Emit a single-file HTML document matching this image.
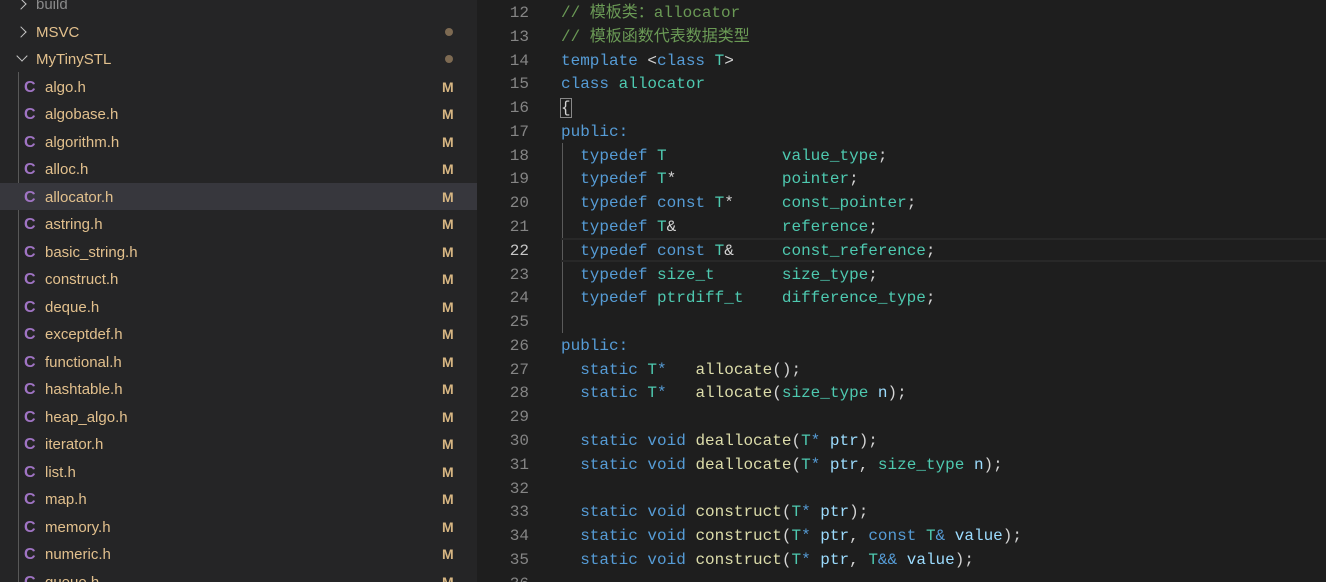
<!DOCTYPE html>
<html style="overflow:hidden;width:1326px;height:582px"><head><meta charset="utf-8"><style>
*{margin:0;padding:0;box-sizing:border-box}
body{width:1326px;height:582px;overflow:hidden;background:#1e1e1e;position:relative;font-family:"Liberation Sans","Noto Sans CJK SC",sans-serif}
#side{position:absolute;left:0;top:0;width:477px;height:582px;background:#252526;overflow:hidden}
.r{position:absolute;left:0;width:477px;height:27.5px;line-height:29px;font-size:15px;color:#e2c08d}
.r .n{position:absolute;left:45px}
.r .c{position:absolute;left:24px;color:#a074c4;font-weight:bold;font-size:16px}
.r .m{position:absolute;left:442px;font-weight:bold;font-size:14px;color:#d7b682}
.r .d{position:absolute;left:445px;top:10px;width:8px;height:8px;border-radius:50%;background:#7d6a52}
.chev{position:absolute;left:17px;top:10px;width:8px;height:8px;border-right:1.5px solid #c5c5c5;border-top:1.5px solid #c5c5c5;transform:rotate(45deg)}
.down{left:18px;top:7px;transform:rotate(135deg)}
#guide{position:absolute;left:18px;top:72px;width:1px;height:520px;background:#585858}
#ed{position:absolute;left:477px;top:0;right:0;height:582px;background:#1e1e1e;overflow:hidden}
.l{position:absolute;left:0;right:0;height:23.78px;line-height:27px;font-family:"Liberation Mono","Noto Sans CJK SC",monospace;font-size:16px;white-space:pre;color:#d4d4d4}
.ln{position:absolute;left:0;width:52px;text-align:right;color:#858585}
.cd{position:absolute;left:84px}
.cm{color:#6a9955}.k{color:#569cd6}.t{color:#4ec9b0}.f{color:#dcdcaa}.v{color:#9cdcfe}
</style></head><body>
<div id="side">
<div id="guide"></div>
<div class="r" style="top:-10px"><span class="chev"></span><span class="n" style="left:36px;color:#8b8b8b">build</span></div>
<div class="r" style="top:17.5px"><span class="chev"></span><span class="n" style="left:36px">MSVC</span><span class="d"></span></div>
<div class="r" style="top:45px"><span class="chev down"></span><span class="n" style="left:36px">MyTinySTL</span><span class="d"></span></div>
<div class="r" style="top:72.5px"><span class="c">C</span><span class="n">algo.h</span><span class="m">M</span></div>
<div class="r" style="top:100px"><span class="c">C</span><span class="n">algobase.h</span><span class="m">M</span></div>
<div class="r" style="top:127.5px"><span class="c">C</span><span class="n">algorithm.h</span><span class="m">M</span></div>
<div class="r" style="top:155px"><span class="c">C</span><span class="n">alloc.h</span><span class="m">M</span></div>
<div class="r" style="top:182.5px;background:#37373d"><span class="c">C</span><span class="n">allocator.h</span><span class="m">M</span></div>
<div class="r" style="top:210px"><span class="c">C</span><span class="n">astring.h</span><span class="m">M</span></div>
<div class="r" style="top:237.5px"><span class="c">C</span><span class="n">basic_string.h</span><span class="m">M</span></div>
<div class="r" style="top:265px"><span class="c">C</span><span class="n">construct.h</span><span class="m">M</span></div>
<div class="r" style="top:292.5px"><span class="c">C</span><span class="n">deque.h</span><span class="m">M</span></div>
<div class="r" style="top:320px"><span class="c">C</span><span class="n">exceptdef.h</span><span class="m">M</span></div>
<div class="r" style="top:347.5px"><span class="c">C</span><span class="n">functional.h</span><span class="m">M</span></div>
<div class="r" style="top:375px"><span class="c">C</span><span class="n">hashtable.h</span><span class="m">M</span></div>
<div class="r" style="top:402.5px"><span class="c">C</span><span class="n">heap_algo.h</span><span class="m">M</span></div>
<div class="r" style="top:430px"><span class="c">C</span><span class="n">iterator.h</span><span class="m">M</span></div>
<div class="r" style="top:457.5px"><span class="c">C</span><span class="n">list.h</span><span class="m">M</span></div>
<div class="r" style="top:485px"><span class="c">C</span><span class="n">map.h</span><span class="m">M</span></div>
<div class="r" style="top:512.5px"><span class="c">C</span><span class="n">memory.h</span><span class="m">M</span></div>
<div class="r" style="top:540px"><span class="c">C</span><span class="n">numeric.h</span><span class="m">M</span></div>
<div class="r" style="top:567.5px"><span class="c">C</span><span class="n">queue.h</span><span class="m">M</span></div>
</div>
<div id="ed">
<div style="position:absolute;left:85px;top:142.7px;width:1px;height:190px;background:#5a5a5a"></div>
<div style="position:absolute;left:84px;right:0;top:237.8px;height:23.78px;border-top:2px solid #282828;border-bottom:2px solid #282828"></div>
<div class="l" style="top:0"><span class="ln">12</span><span class="cd cm">// 模板类：allocator</span></div>
<div class="l" style="top:23.78px"><span class="ln">13</span><span class="cd cm">// 模板函数代表数据类型</span></div>
<div class="l" style="top:47.56px"><span class="ln">14</span><span class="cd"><span class="k">template</span> &lt;<span class="k">class</span> <span class="t">T</span>&gt;</span></div>
<div class="l" style="top:71.34px"><span class="ln">15</span><span class="cd"><span class="k">class</span> <span class="t">allocator</span></span></div>
<div class="l" style="top:95.12px"><span class="ln">16</span><span class="cd"><span style="outline:1px solid #888">{</span></span></div>
<div class="l" style="top:118.9px"><span class="ln">17</span><span class="cd k">public:</span></div>
<div class="l" style="top:142.68px"><span class="ln">18</span><span class="cd">  <span class="k">typedef</span> <span class="t">T</span>            <span class="t">value_type</span>;</span></div>
<div class="l" style="top:166.46px"><span class="ln">19</span><span class="cd">  <span class="k">typedef</span> <span class="t">T</span>*           <span class="t">pointer</span>;</span></div>
<div class="l" style="top:190.24px"><span class="ln">20</span><span class="cd">  <span class="k">typedef</span> <span class="k">const</span> <span class="t">T</span>*     <span class="t">const_pointer</span>;</span></div>
<div class="l" style="top:214.02px"><span class="ln">21</span><span class="cd">  <span class="k">typedef</span> <span class="t">T</span>&amp;           <span class="t">reference</span>;</span></div>
<div class="l" style="top:237.8px"><span class="ln" style="color:#c6c6c6">22</span><span class="cd">  <span class="k">typedef</span> <span class="k">const</span> <span class="t">T</span>&amp;     <span class="t">const_reference</span>;</span></div>
<div class="l" style="top:261.58px"><span class="ln">23</span><span class="cd">  <span class="k">typedef</span> <span class="t">size_t</span>       <span class="t">size_type</span>;</span></div>
<div class="l" style="top:285.36px"><span class="ln">24</span><span class="cd">  <span class="k">typedef</span> <span class="t">ptrdiff_t</span>    <span class="t">difference_type</span>;</span></div>
<div class="l" style="top:309.14px"><span class="ln">25</span></div>
<div class="l" style="top:332.92px"><span class="ln">26</span><span class="cd k">public:</span></div>
<div class="l" style="top:356.7px"><span class="ln">27</span><span class="cd">  <span class="k">static</span> <span class="t">T</span><span class="k">*</span>   <span class="f">allocate</span>();</span></div>
<div class="l" style="top:380.48px"><span class="ln">28</span><span class="cd">  <span class="k">static</span> <span class="t">T</span><span class="k">*</span>   <span class="f">allocate</span>(<span class="t">size_type</span> <span class="v">n</span>);</span></div>
<div class="l" style="top:404.26px"><span class="ln">29</span></div>
<div class="l" style="top:428.04px"><span class="ln">30</span><span class="cd">  <span class="k">static</span> <span class="k">void</span> <span class="f">deallocate</span>(<span class="t">T</span><span class="k">*</span> <span class="v">ptr</span>);</span></div>
<div class="l" style="top:451.82px"><span class="ln">31</span><span class="cd">  <span class="k">static</span> <span class="k">void</span> <span class="f">deallocate</span>(<span class="t">T</span><span class="k">*</span> <span class="v">ptr</span>, <span class="t">size_type</span> <span class="v">n</span>);</span></div>
<div class="l" style="top:475.6px"><span class="ln">32</span></div>
<div class="l" style="top:499.38px"><span class="ln">33</span><span class="cd">  <span class="k">static</span> <span class="k">void</span> <span class="f">construct</span>(<span class="t">T</span><span class="k">*</span> <span class="v">ptr</span>);</span></div>
<div class="l" style="top:523.16px"><span class="ln">34</span><span class="cd">  <span class="k">static</span> <span class="k">void</span> <span class="f">construct</span>(<span class="t">T</span><span class="k">*</span> <span class="v">ptr</span>, <span class="k">const</span> <span class="t">T</span><span class="k">&amp;</span> <span class="v">value</span>);</span></div>
<div class="l" style="top:546.94px"><span class="ln">35</span><span class="cd">  <span class="k">static</span> <span class="k">void</span> <span class="f">construct</span>(<span class="t">T</span><span class="k">*</span> <span class="v">ptr</span>, <span class="t">T</span><span class="k">&amp;&amp;</span> <span class="v">value</span>);</span></div>
<div class="l" style="top:570.72px"><span class="ln">36</span></div>
</div>
</body></html>
